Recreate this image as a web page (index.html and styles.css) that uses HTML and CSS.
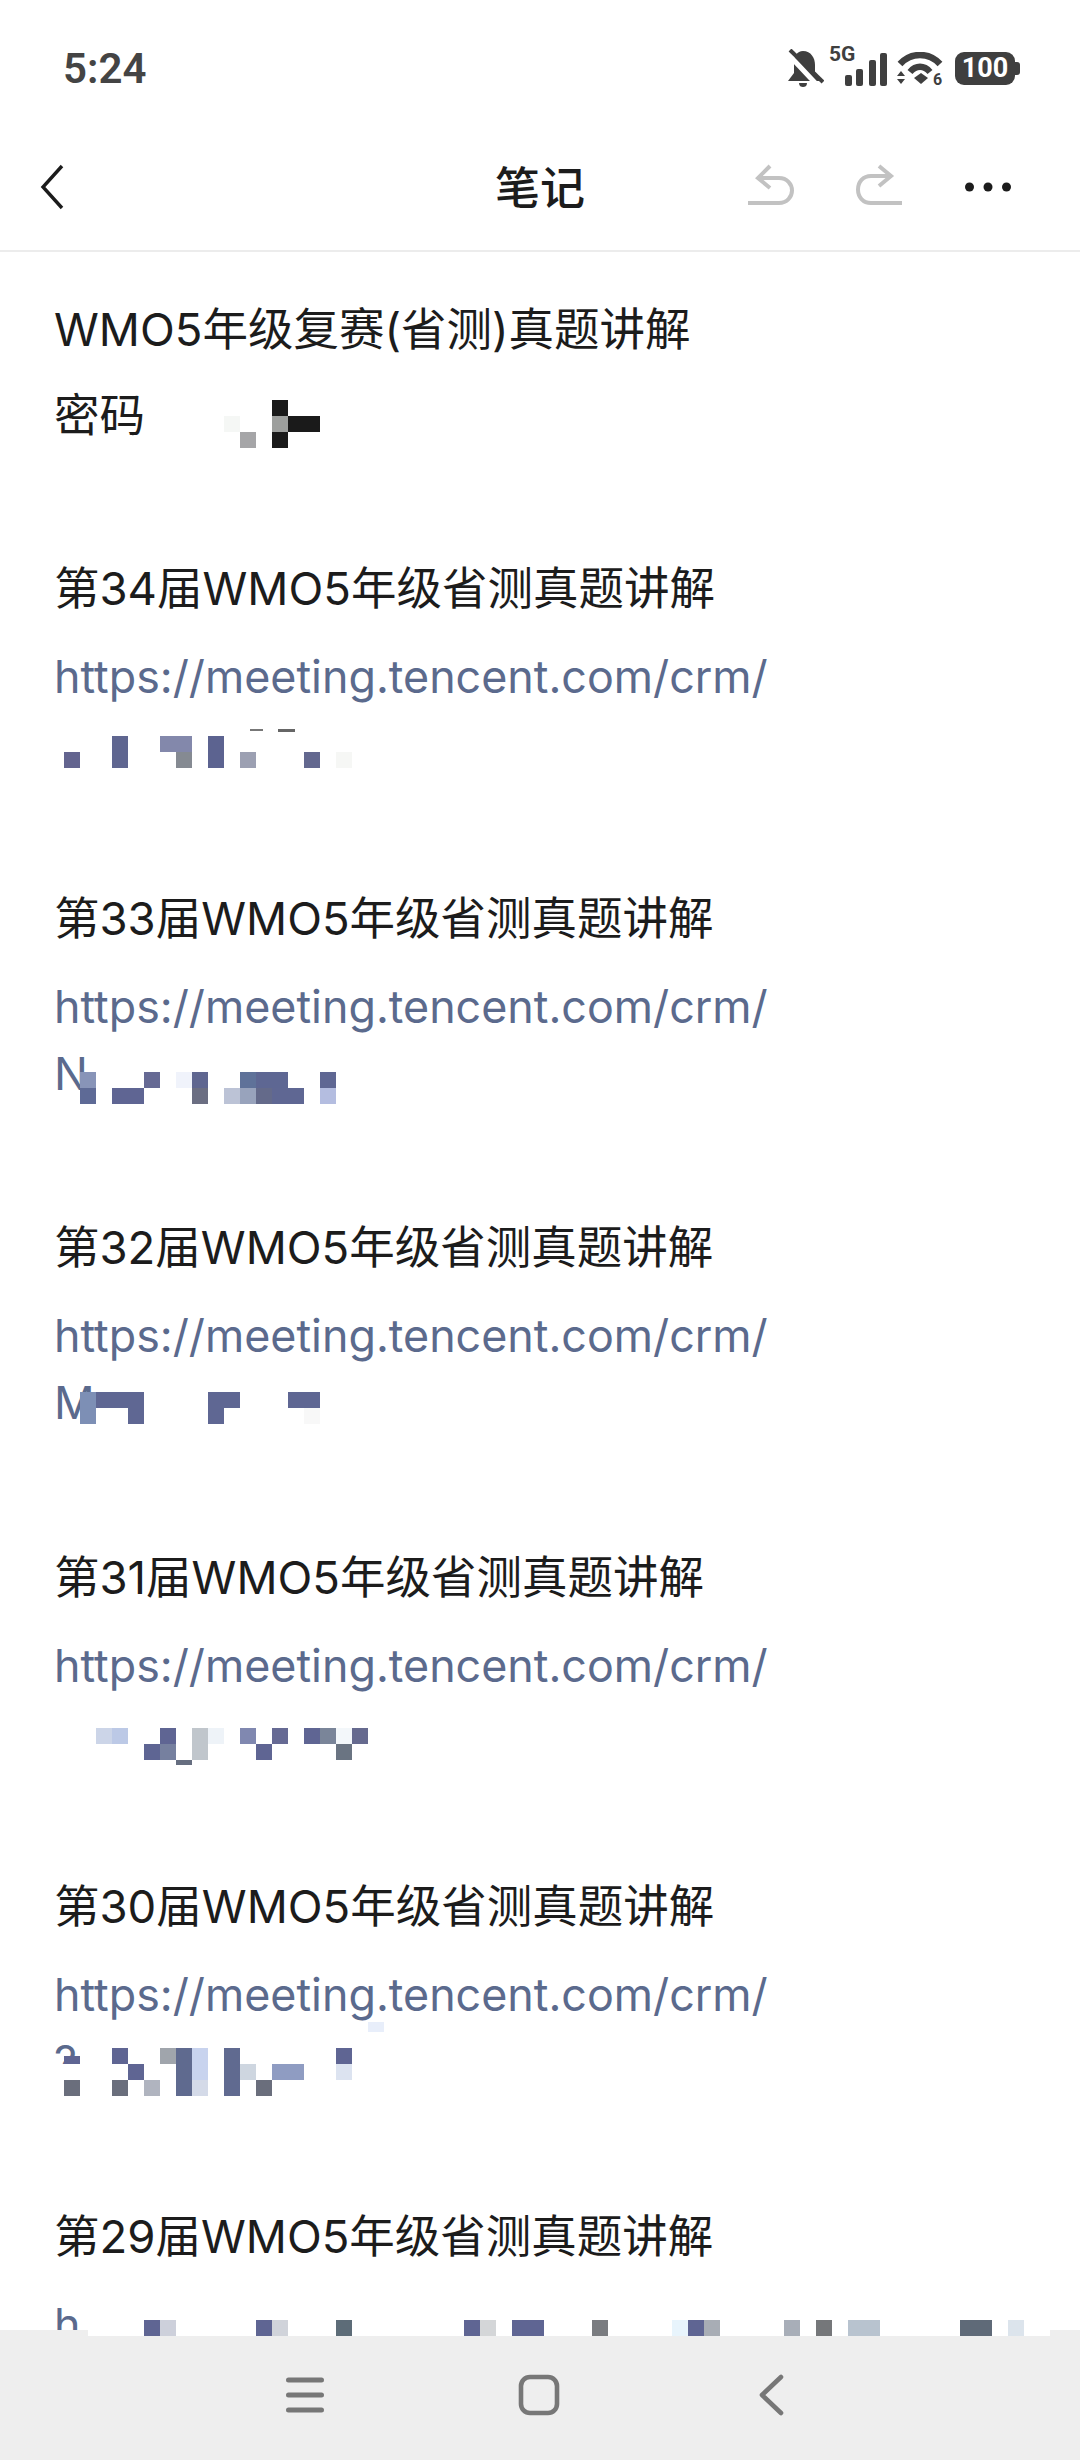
FILE: index.html
```html
<!DOCTYPE html>
<html lang="zh-CN">
<head>
<meta charset="utf-8">
<title>笔记</title>
<link rel="stylesheet" href="styles.css">
</head>
<body>
<div class="phone">
  <header class="status">
    <span class="clock">5:24</span>
    <div class="status-icons">
      <svg class="ic-bell" viewBox="0 0 36 38" width="36" height="38"><path d="M15 2c8 0 12 7 12 14v7l7 9H0l6-8V14C6 7 9 2 15 2z" fill="#3f3f3f"/><path d="M11 34h8c0 3-2 4-4 4s-4-1-4-4z" fill="#3f3f3f"/><path d="M0 5l31 33" stroke="#fff" stroke-width="5"/><path d="M2 1l33 32" stroke="#3f3f3f" stroke-width="4"/></svg>
      <div class="signal">
        <span class="five-g">5G</span>
        <svg viewBox="0 0 43 33" width="43" height="33"><g fill="#3f3f3f"><rect x="0" y="22" width="7" height="11" rx="2"/><rect x="11" y="16" width="7" height="17" rx="2"/><rect x="24" y="7" width="7" height="26" rx="2"/><rect x="35" y="0" width="7" height="33" rx="2"/></g></svg>
      </div>
      <svg viewBox="0 0 46 33" width="46" height="33"><path d="M3 12c11-12 29-12 40 0" fill="none" stroke="#3f3f3f" stroke-width="6.500"/><path d="M13 20c6-7 14-7 20 0" fill="none" stroke="#3f3f3f" stroke-width="6.500"/><path d="M17 26l7-5 7 5-7 6z" fill="#3f3f3f"/><path d="M0 24l4-5 4 5zM0 27l4 5 4-5z" fill="#3f3f3f"/><text x="36" y="33" class="wifi-six">6</text></svg>
      <div class="battery"><span class="battery-val">100</span></div>
    </div>
  </header>

  <nav class="toolbar">
    <svg class="tb-left" viewBox="0 0 24 46" width="24" height="46"><path d="M22 2L3 23l19 21" fill="none" stroke="#1c1c1c" stroke-width="3.400"/></svg>
    <span class="tb-title">笔记</span>
    <div class="tb-right">
      <svg viewBox="0 0 46 46" width="46" height="46"><path d="M22 2L10 14l12 10M10 14h21c8 0 13 6 13 12.500S39 39 31 39H0" fill="none" stroke="#c2c2c2" stroke-width="4"/></svg>
      <svg viewBox="0 0 46 46" width="46" height="46"><path d="M23 2l12 10-12 10M35 12H15C7 12 2 18 2 25.500S7 39 15 39h31" fill="none" stroke="#c2c2c2" stroke-width="4"/></svg>
      <svg viewBox="0 0 48 10" width="48" height="10"><circle cx="5.500" cy="5" r="4.500" fill="#1c1c1c"/><circle cx="24" cy="5" r="4.500" fill="#1c1c1c"/><circle cx="42.500" cy="5" r="4.500" fill="#1c1c1c"/></svg>
    </div>
  </nav>

  <main class="note">
    <section class="block first">
      <p class="line">WMO5年级复赛(省测)真题讲解</p>
      <p class="line">密码</p>
    </section>
    <section class="block">
      <p class="line">第34届WMO5年级省测真题讲解</p>
      <p class="link">https://meeting.tencent.com/crm/</p>
      <p class="code">&nbsp;</p>
    </section>
    <section class="block">
      <p class="line">第33届WMO5年级省测真题讲解</p>
      <p class="link">https://meeting.tencent.com/crm/</p>
      <p class="code">N</p>
    </section>
    <section class="block">
      <p class="line">第32届WMO5年级省测真题讲解</p>
      <p class="link">https://meeting.tencent.com/crm/</p>
      <p class="code">M</p>
    </section>
    <section class="block">
      <p class="line">第31届WMO5年级省测真题讲解</p>
      <p class="link">https://meeting.tencent.com/crm/</p>
      <p class="code">&nbsp;</p>
    </section>
    <section class="block">
      <p class="line">第30届WMO5年级省测真题讲解</p>
      <p class="link">https://meeting.tencent.com/crm/</p>
      <p class="code">?</p>
    </section>
    <section class="block">
      <p class="line">第29届WMO5年级省测真题讲解</p>
      <p class="link">h</p>
    </section>
  </main>

  <footer class="navbar">
    <svg viewBox="0 0 38 36" width="38" height="36"><path d="M2.500 3h33M2.500 18h33M2.500 33h33" stroke="#777" stroke-width="5" stroke-linecap="round"/></svg>
    <svg viewBox="0 0 42 42" width="42" height="42"><rect x="3" y="3" width="36" height="36" rx="9" fill="none" stroke="#777" stroke-width="4.600"/></svg>
    <svg class="nav-back" viewBox="0 0 26 42" width="26" height="42"><path d="M23 3L4 21l19 18" fill="none" stroke="#777" stroke-width="4.600" stroke-linecap="round" stroke-linejoin="round"/></svg>
  </footer>

  <svg class="mosaic" viewBox="0 0 1080 2460" width="1080" height="2460" shape-rendering="crispEdges">
    <rect x="88" y="2330" width="962" height="6" fill="#fff"/>
    <g>
      <rect x="224" y="416" width="16" height="16" fill="#f5f7f5"/><rect x="240" y="432" width="16" height="16" fill="#a5a5a7"/><rect x="272" y="400" width="16" height="16" fill="#1a1a1a"/><rect x="272" y="416" width="16" height="16" fill="#9d9f9d"/><rect x="288" y="416" width="32" height="16" fill="#1a1a1a"/><rect x="272" y="432" width="16" height="16" fill="#1a1a1a"/>
    </g>
    <g>
      <rect x="64" y="752" width="16" height="16" fill="#63648f"/><rect x="112" y="736" width="16" height="32" fill="#5f6690"/><rect x="160" y="736" width="32" height="16" fill="#8388ab"/><rect x="176" y="752" width="16" height="16" fill="#858a92"/><rect x="208" y="736" width="16" height="32" fill="#5c6390"/><rect x="240" y="752" width="16" height="16" fill="#9ca0b2"/><rect x="304" y="752" width="16" height="16" fill="#63688f"/><rect x="336" y="752" width="16" height="16" fill="#f6f7f5"/><rect x="250" y="729" width="13" height="2" fill="#777"/><rect x="278" y="729" width="17" height="3" fill="#666"/>
    </g>
    <g>
      <rect x="80" y="1072" width="16" height="16" fill="#8894b8"/><rect x="80" y="1088" width="16" height="16" fill="#5e6a96"/><rect x="112" y="1088" width="32" height="16" fill="#5f6593"/><rect x="144" y="1072" width="16" height="16" fill="#666a94"/><rect x="176" y="1072" width="16" height="16" fill="#f0f3fb"/><rect x="192" y="1072" width="16" height="16" fill="#5f6690"/><rect x="192" y="1088" width="16" height="16" fill="#6b6e82"/><rect x="224" y="1088" width="16" height="16" fill="#bcc3d6"/><rect x="240" y="1088" width="16" height="16" fill="#98a3bc"/><rect x="240" y="1072" width="16" height="16" fill="#5f7299"/><rect x="256" y="1072" width="32" height="16" fill="#5e6793"/><rect x="256" y="1088" width="16" height="16" fill="#646a8a"/><rect x="272" y="1088" width="32" height="16" fill="#5f6793"/><rect x="320" y="1072" width="16" height="16" fill="#5f6793"/><rect x="320" y="1088" width="16" height="16" fill="#b4bde0"/>
    </g>
    <g>
      <rect x="80" y="1392" width="16" height="32" fill="#7d8fb5"/><rect x="96" y="1392" width="48" height="16" fill="#5f6793"/><rect x="128" y="1408" width="16" height="16" fill="#5f6793"/><rect x="208" y="1392" width="32" height="16" fill="#5f6793"/><rect x="208" y="1408" width="16" height="16" fill="#5f6793"/><rect x="288" y="1392" width="32" height="16" fill="#5f6793"/><rect x="304" y="1408" width="16" height="16" fill="#f8f8f8"/>
    </g>
    <g>
      <rect x="96" y="1728" width="16" height="16" fill="#ccd5e8"/><rect x="112" y="1728" width="16" height="16" fill="#bcc9e6"/><rect x="144" y="1744" width="16" height="16" fill="#5e6593"/><rect x="160" y="1728" width="16" height="16" fill="#5f6593"/><rect x="160" y="1744" width="16" height="16" fill="#76809f"/><rect x="176" y="1760" width="16" height="5" fill="#666e80"/><rect x="192" y="1728" width="16" height="32" fill="#c0c6cc"/><rect x="208" y="1728" width="16" height="16" fill="#eef3f8"/><rect x="240" y="1728" width="16" height="16" fill="#8088b0"/><rect x="256" y="1744" width="16" height="16" fill="#5f6593"/><rect x="272" y="1728" width="16" height="16" fill="#666a94"/><rect x="304" y="1728" width="16" height="16" fill="#5f6593"/><rect x="320" y="1728" width="16" height="16" fill="#7a8599"/><rect x="336" y="1728" width="16" height="16" fill="#f3f7fa"/><rect x="336" y="1744" width="16" height="16" fill="#6a7482"/><rect x="352" y="1728" width="16" height="16" fill="#666a8f"/>
    </g>
    <g>
      <rect x="368" y="2022" width="16" height="10" fill="#e8eefa"/><rect x="56" y="2064" width="30" height="16" fill="#fff"/><rect x="64" y="2056" width="16" height="8" fill="#5f6593"/><rect x="64" y="2080" width="16" height="16" fill="#6a6e7c"/><rect x="112" y="2048" width="16" height="16" fill="#5f6593"/><rect x="128" y="2064" width="16" height="16" fill="#5f6593"/><rect x="112" y="2080" width="16" height="16" fill="#6a6e7c"/><rect x="144" y="2080" width="16" height="16" fill="#b0b4bf"/><rect x="160" y="2048" width="16" height="16" fill="#a0a5ac"/><rect x="176" y="2048" width="16" height="48" fill="#5f6a8f"/><rect x="192" y="2048" width="16" height="32" fill="#c8d3ee"/><rect x="192" y="2080" width="16" height="16" fill="#d4dae8"/><rect x="224" y="2048" width="16" height="48" fill="#606a90"/><rect x="240" y="2064" width="16" height="16" fill="#ced6e0"/><rect x="256" y="2080" width="16" height="16" fill="#6a6e7c"/><rect x="272" y="2064" width="32" height="16" fill="#8f9cc2"/><rect x="336" y="2048" width="16" height="16" fill="#5f6593"/><rect x="336" y="2064" width="16" height="16" fill="#dce3f0"/>
    </g>
    <g>
      <rect x="144" y="2320" width="16" height="16" fill="#5f6593"/><rect x="160" y="2320" width="16" height="16" fill="#cdd0db"/><rect x="256" y="2320" width="16" height="16" fill="#5f6593"/><rect x="272" y="2320" width="16" height="16" fill="#d0d3da"/><rect x="336" y="2320" width="16" height="16" fill="#5d6c78"/><rect x="464" y="2320" width="16" height="16" fill="#5f6593"/><rect x="480" y="2320" width="16" height="16" fill="#d4d6d8"/><rect x="512" y="2320" width="32" height="16" fill="#5f6593"/><rect x="592" y="2320" width="16" height="16" fill="#7a7c80"/><rect x="672" y="2320" width="16" height="16" fill="#e8f4fc"/><rect x="688" y="2320" width="16" height="16" fill="#5f6593"/><rect x="704" y="2320" width="16" height="16" fill="#a8adb5"/><rect x="784" y="2320" width="16" height="16" fill="#a8aeb8"/><rect x="816" y="2320" width="16" height="16" fill="#75777a"/><rect x="848" y="2320" width="32" height="16" fill="#b8c3cf"/><rect x="960" y="2320" width="32" height="16" fill="#5f6a78"/><rect x="1008" y="2320" width="16" height="16" fill="#dce4ec"/>
    </g>
  </svg>
</div>
</body>
</html>
```
FILE: styles.css
```css
* { box-sizing: border-box; }
html, body { margin: 0; padding: 0; background: #fff; }
.phone {
  position: relative;
  width: 1080px;
  height: 2460px;
  display: flex;
  flex-direction: column;
  overflow: hidden;
  font-family: "Inter", "Noto Sans CJK SC", sans-serif;
  color: #1c1c1c;
}
.status {
  height: 136px;
  flex: none;
  padding: 0 60px 0 63px;
  display: flex;
  align-items: center;
  justify-content: space-between;
}
.clock {
  font-family: "Roboto", sans-serif;
  font-size: 42px;
  font-weight: 600;
  color: #444;
}
.status-icons { display: flex; align-items: center; gap: 9px; }
.ic-bell { margin-right: 3px; }
.signal { position: relative; width: 50px; height: 36px; display: flex; align-items: flex-end; justify-content: flex-end; margin-left: 2px; }
.five-g {
  position: absolute;
  left: -9px;
  top: -7px;
  font-family: "Roboto", sans-serif;
  font-size: 21px;
  font-weight: 700;
  line-height: 22px;
  color: #3f3f3f;
}
.wifi-six { font-family: "Roboto", sans-serif; font-size: 16px; font-weight: 700; fill: #3f3f3f; }
.battery {
  position: relative;
  width: 60px;
  height: 33px;
  margin-left: 3px;
  margin-right: 5px;
  background: #3f3f3f;
  border-radius: 9px;
  display: flex;
  align-items: center;
  justify-content: center;
}
.battery::after {
  content: "";
  position: absolute;
  right: -5px;
  top: 10px;
  width: 5px;
  height: 13px;
  background: #3f3f3f;
  border-radius: 0 3px 3px 0;
}
.battery-val {
  font-family: "Roboto", sans-serif;
  font-size: 27px;
  font-weight: 700;
  color: #fff;
}
.toolbar {
  height: 116px;
  flex: none;
  display: grid;
  grid-template-columns: 1fr auto 1fr;
  align-items: center;
  padding: 0 68px 12px 40px;
  border-bottom: 2px solid #ececec;
}
.tb-title { font-size: 45px; font-weight: 500; font-family: "Noto Sans CJK SC", sans-serif; color: #1c1c1c; position: relative; left: 14px; top: -2px; }
.tb-left { justify-self: start; }
.tb-right { justify-self: end; display: flex; align-items: center; gap: 62px; }
.note {
  flex: 1;
  min-height: 0;
  overflow: hidden;
  padding: 0 54px;
  font-size: 45.500px;
}
.block { height: 329.600px; }
.block.first { height: 293px; padding-top: 35px; }
.first .line { height: 86px; line-height: 86px; }
.line, .link, .code { margin: 0; white-space: nowrap; }
.line { height: 88px; line-height: 88px; font-weight: 400; font-family: "Inter", "Noto Sans CJK SC", sans-serif; }
.link { height: 88px; line-height: 88px; color: #5b6a8d; font-size: 44.800px; }
.code { height: 76px; line-height: 46px; color: #5b6a8d; font-size: 45px; }
.navbar {
  flex: none;
  height: 130px;
  background: #eeeeee;
  padding: 0 0 0 286px;
  display: flex;
  align-items: center;
  gap: 194px;
}
.nav-back { margin-left: 4px; }
.mosaic { position: absolute; left: 0; top: 0; pointer-events: none; }
```
